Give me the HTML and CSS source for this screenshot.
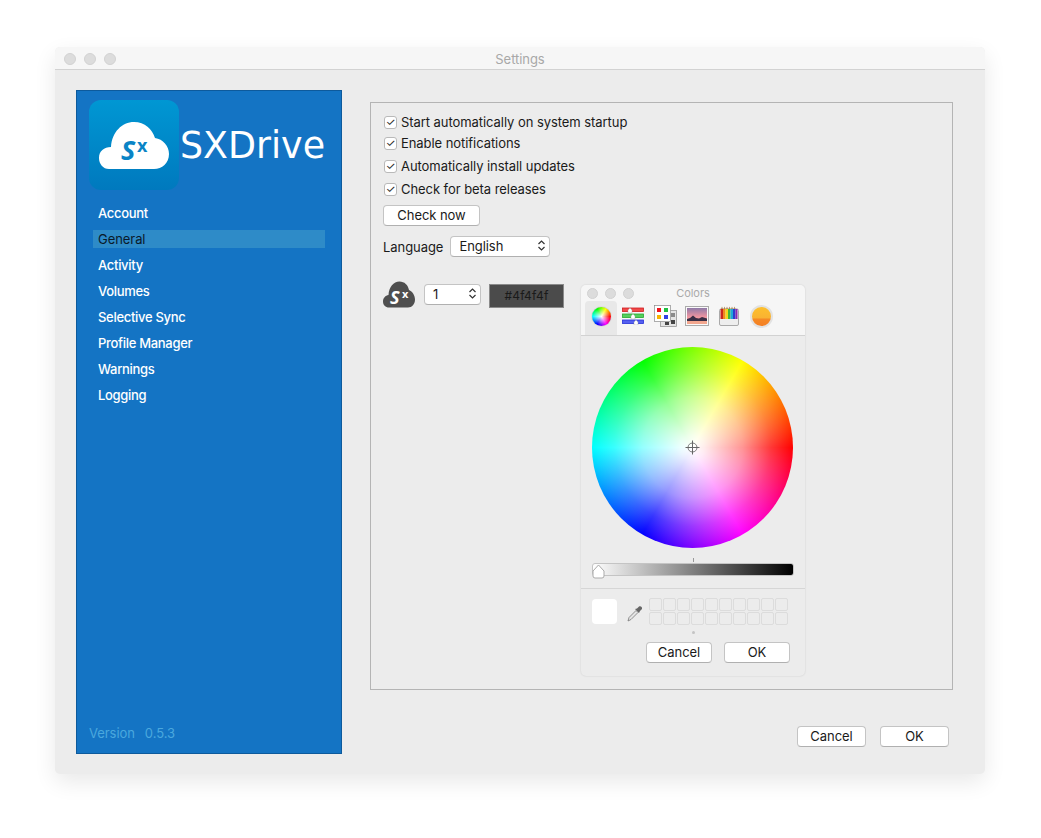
FILE: index.html
```html
<!DOCTYPE html>
<html lang="en">
<head>
    <meta charset="UTF-8">
    <meta name="viewport" content="width=device-width, initial-scale=1.0">
    <link rel="stylesheet" href="styles.css">
    <title>Settings</title>
</head>
<body>
    <div class="window">
        <div class="titlebar">
            <span class="light"></span><span class="light"></span><span class="light"></span>
            <span class="title">Settings</span>
        </div>
        <div class="content">
            <aside class="sidebar">
                <div class="brand">
                    <div class="logo">
                        <svg width="90" height="90" viewBox="0 0 90 90">
                            <path d="M20 69 C14 69 10 64 10 58 C10 51 15 47 22 47 C23 32 33 22 45 22 C56 22 63 29 66 38 C74 39 80 46 80 54 C80 63 73 69 65 69 Z" fill="#fff"/>
                            <text x="32" y="60" class="logo-s">S</text>
                            <text x="48" y="52" class="logo-x">x</text>
                        </svg>
                    </div>
                    <span class="brand-name">SXDrive</span>
                </div>
                <nav class="nav">
                    <a class="nav-item">Account</a>
                    <a class="nav-item active">General</a>
                    <a class="nav-item">Activity</a>
                    <a class="nav-item">Volumes</a>
                    <a class="nav-item">Selective Sync</a>
                    <a class="nav-item">Profile Manager</a>
                    <a class="nav-item">Warnings</a>
                    <a class="nav-item">Logging</a>
                </nav>
                <div class="version"><span>Version</span><span>0.5.3</span></div>
            </aside>

            <main class="main">
                <section class="panel">
                    <label class="check"><span class="box">&#10003;</span>Start automatically on system startup</label>
                    <label class="check c2"><span class="box">&#10003;</span>Enable notifications</label>
                    <label class="check c3"><span class="box">&#10003;</span>Automatically install updates</label>
                    <label class="check c3"><span class="box">&#10003;</span>Check for beta releases</label>
                    <button class="btn check-now">Check now</button>
                    <div class="lang-row">
                        <span>Language</span>
                        <div class="select lang"><span>English</span><svg class="updown" width="9" height="13" viewBox="0 0 9 13"><path d="M1.5 5 L4.5 2 L7.5 5 M1.5 8 L4.5 11 L7.5 8" fill="none" stroke="#333" stroke-width="1.2"/></svg></div>
                    </div>
                    <div class="icon-row">
                        <svg class="tray-icon" width="32" height="27" viewBox="0 0 32 27">
                            <path d="M6 26.500 C2.500 26.500 0 24 0 20.500 C0 17 2.500 14.500 5.500 14 C6 6 10.500 0.500 16.500 0.500 C21.500 0.500 25 4 26 9 C29.500 10.500 32 14.500 32 18.500 C32 23 29 26.500 25 26.500 Z" fill="#4f4f4f"/>
                            <text x="7" y="23" class="tray-s">S</text>
                            <text x="19" y="17" class="tray-x">x</text>
                        </svg>
                        <div class="select spin"><span>1</span><svg class="updown" width="9" height="13" viewBox="0 0 9 13"><path d="M1.5 5 L4.5 2 L7.5 5 M1.5 8 L4.5 11 L7.5 8" fill="none" stroke="#333" stroke-width="1.2"/></svg></div>
                        <div class="swatch-btn">#4f4f4f</div>
                    </div>

                    <div class="colors">
                        <div class="colors-title">
                            <span class="light small"></span><span class="light small"></span><span class="light small"></span>
                            <span class="title small-title">Colors</span>
                        </div>
                        <div class="toolbar">
                            <div class="tool selected"><span class="mini-wheel"></span></div>
                            <div class="tool">
                                <svg width="24" height="18" viewBox="0 0 24 18">
                                    <rect x="1.500" y="1" width="21" height="3.500" fill="#f04a4a" stroke="#d01c20" stroke-width=".8"/>
                                    <rect x="1.500" y="7" width="21" height="3.500" fill="#55cf5c" stroke="#25a82f" stroke-width=".8"/>
                                    <rect x="1.500" y="13" width="21" height="3.500" fill="#5560f0" stroke="#2630d8" stroke-width=".8"/>
                                    <path d="M9 1 L11 3 V6 H7 V3 Z M12 7 L14 9 V12 H10 V9 Z M15 13 L17 15 V18 H13 V15 Z" fill="#fff" stroke="#999" stroke-width=".4"/>
                                </svg>
                            </div>
                            <div class="tool">
                                <svg width="23" height="22" viewBox="0 0 23 22">
                                    <rect x="6.500" y="5.500" width="16" height="16" fill="#e4e4e4" stroke="#8a8a8a" stroke-width=".7"/>
                                    <rect x="17" y="8" width="4" height="4" fill="#8a8a8a"/><rect x="17" y="15" width="4" height="4" fill="#444"/><rect x="11" y="17" width="4" height="3" fill="#444"/>
                                    <rect x=".5" y=".5" width="16" height="16" fill="#fff" stroke="#8a8a8a" stroke-width=".7"/>
                                    <rect x="3" y="3" width="4" height="4" fill="#f0141c"/><rect x="10" y="3" width="4" height="4" fill="#20c040"/>
                                    <rect x="3" y="10" width="4" height="4" fill="#f7b500"/><rect x="10" y="10" width="4" height="4" fill="#3340e6"/>
                                </svg>
                            </div>
                            <div class="tool">
                                <svg width="24" height="20" viewBox="0 0 24 20">
                                    <defs><linearGradient id="sky" x1="0" y1="0" x2="0" y2="1"><stop offset="0" stop-color="#8f7aa8"/><stop offset=".55" stop-color="#ee95a0"/><stop offset="1" stop-color="#f6b79a"/></linearGradient></defs>
                                    <rect x=".5" y=".5" width="23" height="19" fill="#fafafa" stroke="#aaa"/>
                                    <rect x="2" y="2" width="20" height="16" fill="url(#sky)"/>
                                    <path d="M2 13 L5 12 L8 9.500 L11 12 L14 12.500 L17 11 L22 12.500 V15 H2 Z" fill="#3a2f45"/>
                                    <rect x="2" y="15" width="20" height="3" fill="#f3a78f"/>
                                </svg>
                            </div>
                            <div class="tool">
                                <svg width="20" height="20" viewBox="0 0 20 20">
                                    <rect x=".5" y="3" width="19" height="16.500" rx="1.500" fill="#eee" stroke="#aaa"/>
                                    <path d="M2 3 L3 .5 L4 3 Z M4.500 3 L5.500 .5 L6.500 3 Z M7 3 L8 .5 L9 3 Z M9.500 3 L10.500 .5 L11.500 3 Z M12 3 L13 .5 L14 3 Z M14.500 3 L15.500 .5 L16.500 3 Z" fill="#b08a5a"/>
                                    <rect x="1.500" y="3" width="2.500" height="10" fill="#c8281e"/><rect x="4" y="3" width="2.500" height="10" fill="#f08a1d"/><rect x="6.500" y="3" width="2.500" height="10" fill="#f4d81c"/><rect x="9" y="3" width="2.500" height="10" fill="#3fb53f"/><rect x="11.500" y="3" width="2.500" height="10" fill="#1fa8d8"/><rect x="14" y="3" width="2.500" height="10" fill="#2a3fd0"/><rect x="16.500" y="3" width="2" height="10" fill="#8b2ab0"/>
                                </svg>
                            </div>
                            <div class="tool"><span class="crayon"></span></div>
                        </div>
                        <div class="wheel-area">
                            <div class="wheel">
                                <svg class="cross" width="15" height="15" viewBox="0 0 15 15">
                                    <circle cx="7.500" cy="7.500" r="4.500" fill="none" stroke="#777"/>
                                    <path d="M7.500 0.500 V14.500 M0.500 7.500 H14.500" stroke="#666"/>
                                </svg>
                            </div>
                        </div>
                        <div class="slider-area">
                            <span class="tick"></span>
                            <div class="slider">
                                <svg class="thumb" width="13" height="15" viewBox="0 0 13 15">
                                    <path d="M6.500 1 L12 7 V12 Q12 14 10 14 H3 Q1 14 1 12 V7 Z" fill="#fff" stroke="#aaa"/>
                                </svg>
                            </div>
                        </div>
                        <div class="wells">
                            <div class="well-row">
                                <div class="well"></div>
                                <svg class="dropper" width="16" height="17" viewBox="0 0 16 17">
                                    <path d="M1 16 L2 12.500 L9 5.500 L11 7.500 L4 14.500 Z" fill="#e4e4e4" stroke="#777" stroke-width=".8"/>
                                    <path d="M8 4 L12 8 L13 6 L15 4 C15.500 2 13.500 0.500 12 1.500 L10 3.500 Z" fill="#666"/>
                                </svg>
                                <div class="grid" id="swatches"></div>
                            </div>
                            <span class="dot"></span>
                            <div class="dialog-btns">
                                <button class="btn dlg">Cancel</button>
                                <button class="btn dlg">OK</button>
                            </div>
                        </div>
                    </div>
                </section>
                <div class="actions">
                    <button class="btn act">Cancel</button>
                    <button class="btn act">OK</button>
                </div>
            </main>
        </div>
    </div>
    <script>
        // empty wells of the colour picker
        var grid = document.getElementById("swatches");
        for (var i = 0; i < 20; i++) {
            grid.appendChild(document.createElement("span"));
        }
    </script>
</body>
</html>
```

FILE: styles.css
```css
html, body {
    margin: 0;
    padding: 0;
    background-color: #fff;
}

body {
    width: 1041px;
    height: 838px;
    overflow: hidden;
    font-family: Inter, "Liberation Sans", sans-serif;
    font-size: 13px;
    letter-spacing: -0.06px;
    color: #1a1a1a;
}

.window {
    width: 930px;
    height: 727px;
    margin: 47px 0 0 55px;
    background-color: #ececec;
    border-radius: 5px;
    box-shadow: 0 8px 22px rgba(0, 0, 0, 0.09);
    display: flex;
    flex-direction: column;
}

.titlebar {
    height: 22px;
    flex: none;
    box-sizing: content-box;
    display: flex;
    align-items: center;
    gap: 8px;
    padding-left: 9px;
    background-color: #f6f6f6;
    border-bottom: 1px solid #d2d2d2;
    border-radius: 5px 5px 0 0;
    position: relative;
}

.titlebar .light {
    margin-top: 2px;
}

.light {
    width: 12px;
    height: 12px;
    border-radius: 50%;
    background-color: #dcdcdc;
    border: 1px solid #d2d2d2;
    box-sizing: border-box;
}

.title {
    position: absolute;
    left: 0;
    right: 0;
    text-align: center;
    color: #a8a8a8;
    font-size: 13px;
    padding-top: 2px;
}

.content {
    flex: 1;
    display: flex;
    padding: 20px 32px 20px 21px;
}

.sidebar {
    width: 266px;
    height: 664px;
    box-sizing: border-box;
    background-color: #1474c4;
    border: 1px solid #0d5a9c;
    display: flex;
    flex-direction: column;
    padding: 9px 16px 12px 12px;
}

.brand {
    display: flex;
    height: 90px;
}

.logo {
    width: 90px;
    height: 90px;
    border-radius: 12px;
    background: linear-gradient(#0097d3, #0079be);
}

.logo-s {
    font: italic bold 27px "Open Sans", sans-serif;
    fill: #0a84c6;
}

.logo-x {
    font: bold 18px "Open Sans", sans-serif;
    fill: #0a84c6;
}

.tray-s {
    font: italic bold 18px "Open Sans", sans-serif;
    fill: #fff;
}

.tray-x {
    font: bold 11px "Open Sans", sans-serif;
    fill: #fff;
}

.brand-name {
    font-family: "DejaVu Sans", sans-serif;
    font-size: 36.400px;
    letter-spacing: 0;
    color: #fff;
    line-height: 92px;
    margin-left: 1px;
}

.nav {
    display: flex;
    flex-direction: column;
    gap: 8px;
    margin-top: 14px;
    margin-left: 4px;
    flex: 1;
}

.nav-item {
    height: 18px;
    line-height: 19px;
    padding-left: 5px;
    color: #fff;
    font-weight: 500;
    letter-spacing: -0.3px;
}

.nav-item.active {
    background-color: #2e8bc8;
    color: #0a1a2a;
    font-weight: 400;
    letter-spacing: -0.06px;
}

.version {
    display: flex;
    gap: 10px;
    color: #4aa8de;
}

.main {
    flex: 1;
    margin-left: 28px;
    display: flex;
    flex-direction: column;
    margin-top: 12px;
}

.panel {
    width: 583px;
    height: 588px;
    box-sizing: border-box;
    border: 1px solid #b4b4b4;
    padding: 9px 12px;
    position: relative;
    display: flex;
    flex-direction: column;
    align-items: flex-start;
}

.check {
    display: flex;
    align-items: center;
    gap: 4px;
    height: 20px;
}

.c2 {
    margin-top: 1px;
}

.c3 {
    margin-top: 3px;
}

.box {
    width: 13px;
    height: 13px;
    margin-left: 1px;
    box-sizing: border-box;
    background-color: #fff;
    border: 1px solid #b9b9b9;
    border-radius: 3px;
    font-size: 11px;
    line-height: 11px;
    text-align: center;
    color: #222;
}

.btn {
    font-family: inherit;
    font-size: 13px;
    letter-spacing: -0.06px;
    color: #1a1a1a;
    background-color: #fff;
    border: 1px solid #c4c4c4;
    border-bottom-color: #b0b0b0;
    border-radius: 4px;
    padding: 0 0 2px 0;
    height: 21px;
}

.check-now {
    width: 97px;
    margin-top: 6px;
}

.lang-row {
    display: flex;
    align-items: center;
    gap: 7px;
    margin-top: 10px;
}

.select {
    height: 21px;
    box-sizing: border-box;
    background-color: #fff;
    border: 1px solid #c4c4c4;
    border-bottom-color: #b0b0b0;
    border-radius: 4px;
    display: flex;
    align-items: center;
    justify-content: space-between;
    padding: 0 3px 2px 8px;
}

.lang {
    width: 100px;
}

.spin {
    width: 57px;
    margin-left: 9px;
    margin-top: 3px;
    padding-left: 8px;
}

.icon-row {
    display: flex;
    align-items: flex-start;
    margin-top: 24px;
}

.swatch-btn {
    width: 75px;
    height: 24px;
    margin-left: 8px;
    margin-top: 3px;
    background-color: #4b4b4b;
    border: 1px solid #8a8a8a;
    box-sizing: border-box;
    text-align: center;
    line-height: 22px;
    color: #1a1a1a;
    font-size: 12px;
    letter-spacing: 0.2px;
}

.colors {
    position: absolute;
    left: 210px;
    top: 182px;
    width: 224px;
    height: 391px;
    background-color: #ececec;
    border-radius: 5px;
    box-shadow: 0 0 2px rgba(0, 0, 0, 0.14);
    display: flex;
    flex-direction: column;
}

.colors-title {
    height: 16px;
    display: flex;
    align-items: center;
    gap: 7px;
    padding: 0 6px;
    position: relative;
    background-color: #f6f6f6;
    border-radius: 5px 5px 0 0;
}

.light.small {
    width: 11px;
    height: 11px;
}

.small-title {
    font-size: 11px;
    color: #aaa;
    padding-top: 0;
}

.toolbar {
    height: 34px;
    padding-left: 4px;
    display: flex;
    align-items: flex-start;
    background-color: #f6f6f6;
    border-bottom: 1px solid #d2d2d2;
}

.tool {
    width: 32px;
    height: 34px;
    box-sizing: border-box;
    padding-bottom: 4px;
    display: flex;
    align-items: center;
    justify-content: center;
}

.tool.selected {
    background-color: #e8e8e8;
    border-radius: 4px 4px 0 0;
}

.mini-wheel {
    width: 19px;
    height: 19px;
    border-radius: 50%;
    background: radial-gradient(circle closest-side, #fff 0, rgba(255, 255, 255, 0) 90%),
        conic-gradient(from 90deg, #f00, #f0f, #00f, #0ff, #0f0, #ff0, #f00);
    box-shadow: 0 0 1px #777;
}

.crayon {
    width: 23px;
    height: 23px;
    box-sizing: border-box;
    border-radius: 50%;
    background: linear-gradient(#fdc02c 0, #f9b233 60%, #f58a25 61%, #f47f24 100%);
    border: 2px solid #e2e2e2;
}

.wheel-area {
    padding: 11px 0 0 11px;
}

.wheel {
    width: 201px;
    height: 201px;
    border-radius: 50%;
    position: relative;
    background: radial-gradient(circle closest-side, #fff 0, rgba(255, 255, 255, 0.92) 12%, rgba(255, 255, 255, 0.58) 50%, rgba(255, 255, 255, 0.22) 78%, rgba(255, 255, 255, 0) 100%),
        conic-gradient(from 90deg, #f00, #f0f, #00f, #0ff, #0f0, #ff0, #f00);
}

.cross {
    position: absolute;
    left: 93px;
    top: 93px;
}

.slider-area {
    position: relative;
    padding: 15px 11px 12px 11px;
    border-bottom: 1px solid #d6d6d6;
}

.tick {
    position: absolute;
    left: 112px;
    top: 10px;
    width: 1px;
    height: 4px;
    background-color: #999;
}

.slider {
    height: 11px;
    position: relative;
    border: 1px solid #c4c4c4;
    border-radius: 3px;
    background: linear-gradient(to right, #fff, #000);
}

.thumb {
    position: absolute;
    left: -1px;
    top: 0;
}

.wells {
    padding: 10px 15px 0 11px;
    display: flex;
    flex-direction: column;
}

.well-row {
    display: flex;
    align-items: flex-start;
}

.well {
    width: 25px;
    height: 25px;
    background-color: #fff;
    border-radius: 4px;
}

.dropper {
    margin: 6px 0 0 10px;
}

.grid {
    margin: -1px 0 0 6px;
    display: grid;
    grid-template-columns: repeat(10, 13px);
    grid-auto-rows: 13px;
    gap: 1px;
}

.grid span {
    border: 1px solid #dcdcdc;
    border-radius: 2px;
    box-sizing: border-box;
}

.dot {
    width: 3px;
    height: 3px;
    border-radius: 50%;
    background-color: #c4c4c4;
    margin: 6px 0 0 100px;
}

.dialog-btns {
    display: flex;
    gap: 12px;
    margin: 8px 0 0 54px;
}

.dlg {
    width: 66px;
}

.actions {
    display: flex;
    gap: 14px;
    margin: 36px 0 0 427px;
}

.act {
    width: 69px;
}
```
